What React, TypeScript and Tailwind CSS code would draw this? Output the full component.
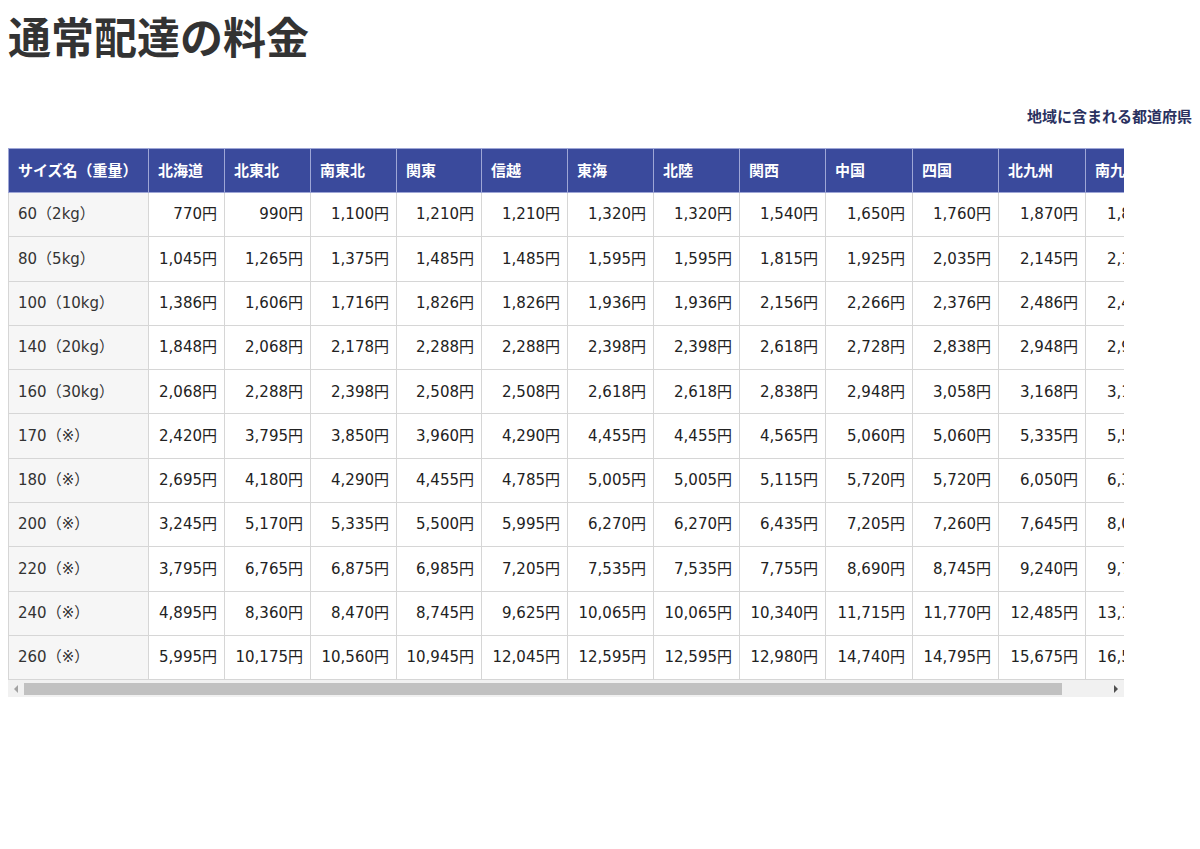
import React from "react";

const regions = ["北海道", "北東北", "南東北", "関東", "信越", "東海", "北陸", "関西", "中国", "四国", "北九州", "南九州"];
const widths = [140, 76, 86, 86, 85, 86, 86, 86, 86, 87, 86, 87, 87];

const rows: [string, string[]][] = [
  ["60（2kg）", ["770", "990", "1,100", "1,210", "1,210", "1,320", "1,320", "1,540", "1,650", "1,760", "1,870", "1,870"]],
  ["80（5kg）", ["1,045", "1,265", "1,375", "1,485", "1,485", "1,595", "1,595", "1,815", "1,925", "2,035", "2,145", "2,145"]],
  ["100（10kg）", ["1,386", "1,606", "1,716", "1,826", "1,826", "1,936", "1,936", "2,156", "2,266", "2,376", "2,486", "2,486"]],
  ["140（20kg）", ["1,848", "2,068", "2,178", "2,288", "2,288", "2,398", "2,398", "2,618", "2,728", "2,838", "2,948", "2,948"]],
  ["160（30kg）", ["2,068", "2,288", "2,398", "2,508", "2,508", "2,618", "2,618", "2,838", "2,948", "3,058", "3,168", "3,168"]],
  ["170（※）", ["2,420", "3,795", "3,850", "3,960", "4,290", "4,455", "4,455", "4,565", "5,060", "5,060", "5,335", "5,500"]],
  ["180（※）", ["2,695", "4,180", "4,290", "4,455", "4,785", "5,005", "5,005", "5,115", "5,720", "5,720", "6,050", "6,325"]],
  ["200（※）", ["3,245", "5,170", "5,335", "5,500", "5,995", "6,270", "6,270", "6,435", "7,205", "7,260", "7,645", "8,085"]],
  ["220（※）", ["3,795", "6,765", "6,875", "6,985", "7,205", "7,535", "7,535", "7,755", "8,690", "8,745", "9,240", "9,790"]],
  ["240（※）", ["4,895", "8,360", "8,470", "8,745", "9,625", "10,065", "10,065", "10,340", "11,715", "11,770", "12,485", "13,145"]],
  ["260（※）", ["5,995", "10,175", "10,560", "10,945", "12,045", "12,595", "12,595", "12,980", "14,740", "14,795", "15,675", "16,555"]],
];

const jp = "font-['Noto_Sans_CJK_JP',sans-serif]";
const num = "font-['DejaVu_Sans','Noto_Sans_CJK_JP',sans-serif]";

export default function App() {
  return (
    <div className="w-[1200px] h-[849px] bg-white px-[8px] pt-[9px]">
      <h1 className={`${jp} text-[43px] leading-[52px] font-bold text-[#333333] m-0`}>通常配達の料金</h1>
      <div className="flex justify-end mt-[44px]">
        <span className={`${jp} text-[15px] leading-[22px] font-bold text-[#2a3160]`}>地域に含まれる都道府県</span>
      </div>
      <div className="mt-[21px] w-[1116px]">
        <div className="w-[1116px] overflow-hidden">
          <table className="table-fixed border-collapse w-[1164px]">
            <colgroup>
              {widths.map((w, i) => (
                <col key={i} style={{ width: w }} />
              ))}
            </colgroup>
            <thead>
              <tr>
                <th className={`${jp} h-[44px] bg-[#3a4a9c] text-white text-[15px] font-bold text-left pl-[9px] border border-[#9ea6d6] whitespace-nowrap`}>
                  サイズ名（重量）
                </th>
                {regions.map((r) => (
                  <th
                    key={r}
                    className={`${jp} h-[44px] bg-[#3a4a9c] text-white text-[15px] font-bold text-left pl-[9px] border border-[#9ea6d6] whitespace-nowrap`}
                  >
                    {r}
                  </th>
                ))}
              </tr>
            </thead>
            <tbody>
              {rows.map(([name, vals]) => (
                <tr key={name}>
                  <td className={`${num} h-[44.3px] bg-[#f6f6f6] text-[#333333] text-[15px] text-left pl-[9px] border border-[#d6d6d6] whitespace-nowrap`}>
                    {name}
                  </td>
                  {vals.map((v, i) => (
                    <td
                      key={i}
                      className={`${num} h-[44.3px] bg-white text-[#222222] text-[15px] text-right pr-[7px] border border-[#d6d6d6] whitespace-nowrap`}
                    >
                      {v}円
                    </td>
                  ))}
                </tr>
              ))}
            </tbody>
          </table>
        </div>
        <div className="flex h-[17px] bg-[#f1f1f1] items-center">
          <div className="w-[16px] h-[17px] flex items-center justify-center">
            <div className="w-0 h-0 border-y-[4px] border-y-transparent border-r-[4px] border-r-[#a3a3a3]" />
          </div>
          <div className="flex-1 h-[17px] flex items-center">
            <div className="w-[1038px] h-[12px] bg-[#c1c1c1]" />
          </div>
          <div className="w-[16px] h-[17px] flex items-center justify-center">
            <div className="w-0 h-0 border-y-[4px] border-y-transparent border-l-[4px] border-l-[#505050]" />
          </div>
        </div>
      </div>
    </div>
  );
}
